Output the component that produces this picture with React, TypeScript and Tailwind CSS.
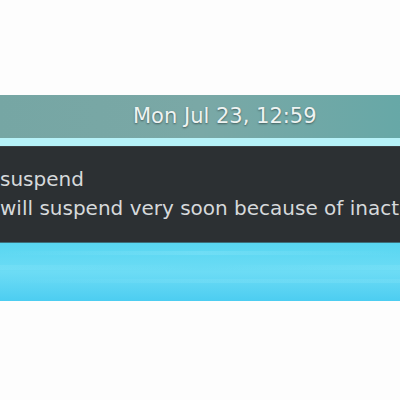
export default function App() {
  return (
    <div className="w-[400px] h-[400px] overflow-hidden bg-white flex flex-col" style={{ fontFamily: '"DejaVu Sans", sans-serif' }}>
      <div className="h-[95px] bg-[#fdfdfd]" />
      <div className="h-[43px] flex items-center pl-[133px] bg-gradient-to-r from-[#76a6a4] via-[#7aa8a6] to-[#67a8a7]">
        <span className="text-[21px] leading-none text-[#eef3f2] whitespace-nowrap [text-shadow:0_1px_2px_rgba(0,0,0,0.45)]">
          Mon Jul 23, 12:59
        </span>
      </div>
      <div className="h-[8px] bg-[#b6f2f8]" />
      <div className="h-[96px] bg-[#2c3033] border-t border-[#3a4044] flex flex-col pt-[18px] overflow-hidden">
        <div className="text-[20px] leading-[29px] text-[#d6d9db] whitespace-nowrap">suspend</div>
        <div className="text-[20px] leading-[29px] text-[#d6d9db] whitespace-nowrap">will suspend very soon because of inact</div>
      </div>
      <div className="h-[1px] bg-[#3d6f7a]" />
      <div className="h-[58px] bg-gradient-to-b from-[#58d6f1] via-[#6cdcf5] to-[#4ccdf1] relative overflow-hidden">
        <div className="absolute left-0 right-0 top-[8px] h-[4px] bg-gradient-to-r from-transparent via-[#7ae1f7] to-transparent opacity-60" />
        <div className="absolute left-0 right-0 top-[22px] h-[5px] bg-gradient-to-r from-[#7ee2f7] via-transparent to-[#7ee2f7] opacity-40" />
        <div className="absolute left-0 right-0 top-[36px] h-[4px] bg-gradient-to-r from-transparent via-[#7be0f7] to-[#7be0f7] opacity-40" />
      </div>
      <div className="flex-1 bg-[#fdfdfd]" />
    </div>
  );
}
